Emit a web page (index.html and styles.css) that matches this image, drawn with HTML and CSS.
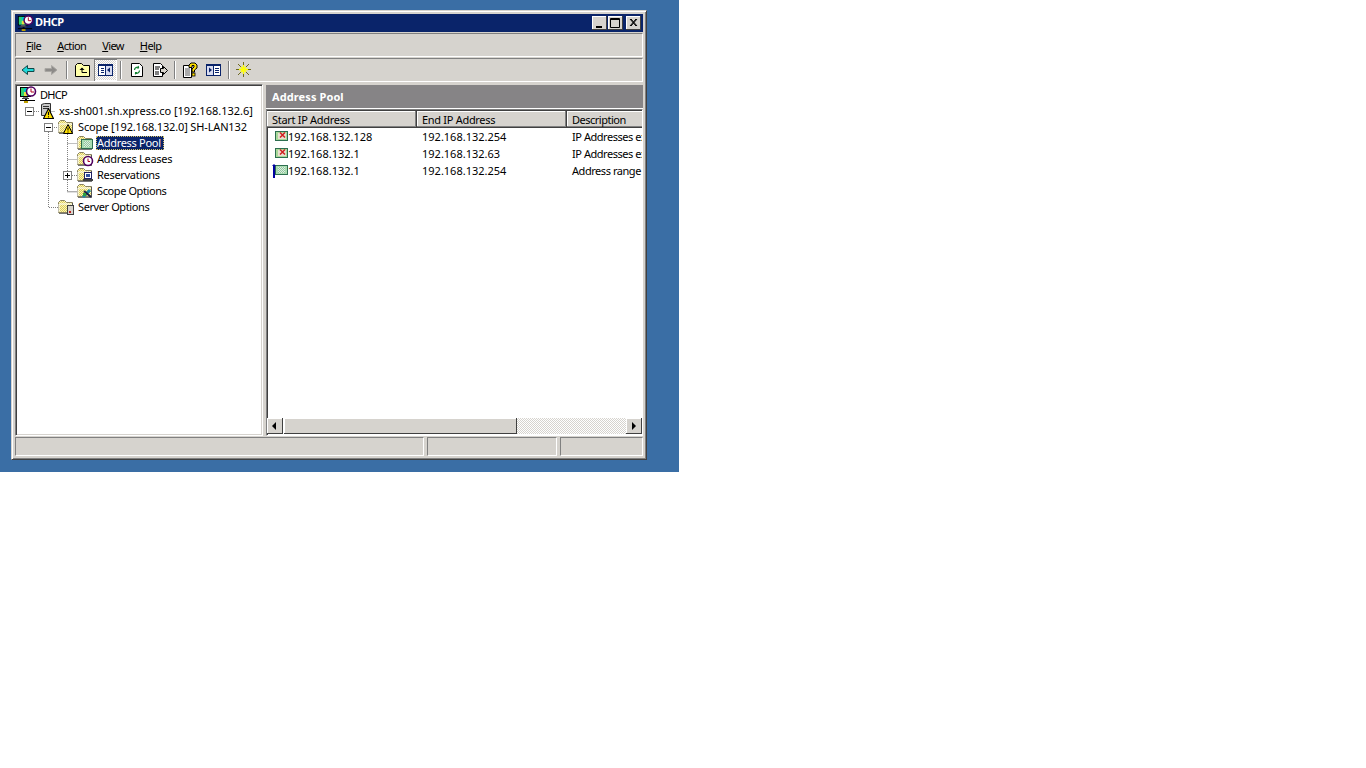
FILE: index.html
```html
<!DOCTYPE html>
<html lang="en">
<head>
<meta charset="utf-8">
<title>DHCP</title>
<link rel="stylesheet" href="styles.css">
</head>
<body>
<svg class="defs" width="0" height="0">
  <defs>
    <pattern id="dither-y" width="2" height="2" patternUnits="userSpaceOnUse">
      <rect width="2" height="2" fill="#fff8b0"/>
      <rect width="1" height="1" fill="#d8c860"/>
      <rect x="1" y="1" width="1" height="1" fill="#d8c860"/>
    </pattern>
    <pattern id="dither-g" width="2" height="2" patternUnits="userSpaceOnUse">
      <rect width="2" height="2" fill="#e0ece0"/>
      <rect width="1" height="1" fill="#90c8a0"/>
      <rect x="1" y="1" width="1" height="1" fill="#90c8a0"/>
    </pattern>
    <symbol id="dhcp" viewBox="0 0 18 18">
      <rect x="1" y="1" width="11" height="10" fill="#000"/>
      <rect x="2" y="2" width="9" height="8" fill="#00c8c8"/>
      <rect x="2" y="2" width="3" height="8" fill="#30d070"/>
      <rect x="5" y="6" width="3" height="4" fill="#e8e040"/>
      <rect x="4" y="11" width="5" height="1" fill="#808080"/>
      <rect x="3" y="12" width="7" height="1" fill="#404040"/>
      <rect x="6" y="13" width="2" height="1" fill="#000"/>
      <rect x="1" y="14" width="15" height="1" fill="#000"/>
      <rect x="5" y="15" width="4" height="2" fill="#c0a000"/>
      <circle cx="12" cy="5.5" r="4.5" fill="#fff" stroke="#500060" stroke-width="1.6"/>
      <path d="M12 2.5V6H15" fill="none" stroke="#b00020" stroke-width="1"/>
    </symbol>
    <symbol id="folder" viewBox="0 0 18 16">
      <path d="M1.5 13.5V3.5L3.5 1.5H7.5L9.5 3.5H15.5V13.5Z" fill="url(#dither-y)" stroke="#8a8360"/>
      <path d="M2 13V5H15" fill="none" stroke="#fff"/>
      <rect x="15" y="4" width="1" height="10" fill="#555"/>
      <rect x="2" y="14" width="14" height="1" fill="#777"/>
    </symbol>
    <symbol id="warn" viewBox="0 0 10 10">
      <path d="M5 .5L9.5 9.5H.5Z" fill="#ffe000" stroke="#000" stroke-width="1"/>
      <rect x="4.5" y="3.5" width="1" height="3" fill="#000"/>
      <rect x="4.5" y="7.5" width="1" height="1" fill="#000"/>
    </symbol>
    <symbol id="pool" viewBox="0 0 13 12">
      <rect x=".5" y=".5" width="12" height="9" fill="#a8dcb0" stroke="#2e6e50"/>
      <rect x="3" y="2" width="7" height="6" fill="url(#dither-g)"/>
    </symbol>
    <symbol id="excl" viewBox="0 0 13 12">
      <rect x=".5" y=".5" width="12" height="9" fill="#a8d898" stroke="#2e6e50"/>
      <rect x="3" y="2" width="8" height="6" fill="#e8e0d0"/>
      <path d="M5 1.5L10 6.5M10 1.5L5 6.5" stroke="#d02020" stroke-width="1.5"/>
    </symbol>
  </defs>
</svg>

<div class="desktop">
  <div class="window">
    <div class="titlebar">
      <svg class="title-icon" width="17" height="17"><use href="#dhcp"/></svg>
      <span class="title-text">DHCP</span>
      <div class="winbtns">
        <span class="winbtn"><svg width="15" height="14"><rect x="4" y="10" width="6" height="2" fill="#000"/></svg></span>
        <span class="winbtn"><svg width="15" height="14"><path d="M2.5 2.5H11.5V11.5H2.5Z M2 3.5H12" fill="none" stroke="#000"/></svg></span>
        <span class="winbtn winbtn-close"><svg width="15" height="14"><path d="M4 3L10 10M5 3L11 10M10 3L4 10M11 3L5 10" stroke="#000"/></svg></span>
      </div>
    </div>

    <div class="band menubar">
      <span><u>F</u>ile</span>
      <span><u>A</u>ction</span>
      <span><u>V</u>iew</span>
      <span><u>H</u>elp</span>
    </div>

    <div class="band toolbar">
      <span class="tool"><svg width="16" height="16"><path d="M2 8L7.5 3.5V6.5H14V9.5H7.5V12.5Z" fill="#20d8d8" stroke="#104848"/></svg></span>
      <span class="tool"><svg width="16" height="16"><path d="M14 8L8.5 3.5V6.5H2V9.5H8.5V12.5Z" fill="#8c8a88" stroke="#a8a6a2"/></svg></span>
      <span class="sep sep-first"></span>
      <span class="tool"><svg width="16" height="16"><path d="M.5 14.5V3.5L2.5 1.5H6.5L8.5 3.5H14.5V14.5Z" fill="#ffffa8" stroke="#000"/><path d="M7 6V10.5H12" fill="none" stroke="#000"/><path d="M4.5 8L7 5.5 9.5 8Z" fill="#000"/></svg></span>
      <span class="tool tool-on"><svg width="15" height="12"><rect x=".5" y=".5" width="14" height="11" fill="#fff" stroke="#0a246a"/><rect x="1" y="1" width="13" height="1" fill="#0a246a"/><path d="M7.5 1V11" stroke="#0a246a"/><path d="M3 4.5H6M3 6.5H6M3 8.5H6" stroke="#0a246a"/><rect x="8" y="2" width="6" height="9" fill="#d8dcf0"/><path d="M12 3.5V8.5L9 6Z" fill="#0a246a"/></svg></span>
      <span class="sep"></span>
      <span class="tool"><svg width="16" height="16"><path d="M2.5 1.5H10.5L13.5 4.5V14.5H2.5Z" fill="#fff" stroke="#000"/><path d="M5.5 8A3 3 0 0 1 10 5.5M10.5 8.5A3 3 0 0 1 6 11" fill="none" stroke="#108030" stroke-width="1.3"/><path d="M10 3.5V6.5H7.5ZM6 13V10H8.5Z" fill="#108030"/></svg></span>
      <span class="tool"><svg width="16" height="16"><path d="M1.5 1.5H8.5L10.5 3.5V14.5H1.5Z" fill="#fff" stroke="#000"/><path d="M3 5H8M3 7H7M3 10H7M3 12H7" stroke="#000"/><path d="M8.5 6.5H11.5V4.5L15.5 8.5 11.5 12.5V10.5H8.5Z" fill="#d8d4cc" stroke="#000"/></svg></span>
      <span class="sep"></span>
      <span class="tool"><svg width="16" height="16"><path d="M.5 3.5H8.5V15.5H.5Z" fill="#fff" stroke="#000"/><path d="M2 7H7M2 9H7M2 11H7M2 13H7" stroke="#555"/><path d="M6 5.5V3L8 1H12L14 3V6L11.5 8V10H9V7L11 5V3.5H9V5.5Z" fill="#ffe000" stroke="#000"/><rect x="9" y="11" width="3" height="3" fill="#ffe000" stroke="#000" stroke-width=".8"/></svg></span>
      <span class="tool"><svg width="15" height="12"><rect x=".5" y=".5" width="14" height="11" fill="#d8dcf0" stroke="#0a246a"/><rect x="1" y="1" width="13" height="1" fill="#0a246a"/><path d="M7.5 1V11" stroke="#0a246a"/><path d="M3 3.5V8.5L6 6Z" fill="#0a246a"/><rect x="8" y="2" width="6" height="9" fill="#fff"/><path d="M9 4.5H13M9 6.5H13M9 8.5H13" stroke="#0a246a"/></svg></span>
      <span class="sep sep-last"></span>
      <span class="tool"><svg width="16" height="16"><path d="M7.5 0V15M0 7.5H15M2 2L13 13M13 2L2 13" stroke="#6e6820" stroke-width="1"/><path d="M7.5 3V12M3 7.5H12M5 5L10 10M10 5L5 10" stroke="#ffff00" stroke-width="1.4"/></svg></span>
    </div>

    <div class="panes">
      <div class="tree">
        <svg class="tree-lines" width="244" height="140">
          <g fill="none" stroke="#808080" stroke-dasharray="1 1">
            <path d="M31.5 26.5H38"/>
            <path d="M31.5 47V122.5H41"/>
            <path d="M35 42.5H41"/>
            <path d="M50.5 47V107H60"/>
            <path d="M50.5 58.5H60"/>
            <path d="M50.5 74.5H60"/>
            <path d="M55 90.5H60"/>
            <path d="M50.5 106.5H60"/>
            <path d="M17 26.5H23"/>
          </g>
          <g fill="#fff" stroke="#808080">
            <rect x="8.5" y="22.5" width="8" height="8"/>
            <rect x="27.5" y="38.5" width="8" height="8"/>
            <rect x="46.5" y="86.5" width="8" height="8"/>
          </g>
          <g stroke="#000">
            <path d="M10 26.5H15"/>
            <path d="M29 42.5H34"/>
            <path d="M48 90.5H53M50.5 88V93"/>
          </g>
        </svg>

        <div class="node d0">
          <svg class="node-icon" width="18" height="18"><use href="#dhcp"/></svg>
          <span class="label t-4">DHCP</span>
        </div>
        <div class="node d1">
          <svg class="node-icon" width="18" height="16">
            <path d="M3.5 1.5L6.5 .5H12.5V12.5H3.5Z" fill="#c8c8c8" stroke="#303030"/>
            <path d="M5 3.5H11M5 5.5H11" stroke="#303030"/>
            <use href="#warn" x="5" y="5" width="11" height="11"/>
          </svg>
          <span class="label">xs-sh001.sh.xpress.co [192.168.132.6]</span>
        </div>
        <div class="node d2">
          <svg class="node-icon" width="18" height="16">
            <use href="#folder"/>
            <use href="#warn" x="6" y="5" width="10" height="10"/>
          </svg>
          <span class="label t-1">Scope [192.168.132.0] SH-LAN132</span>
        </div>
        <div class="node d3">
          <svg class="node-icon" width="18" height="16">
            <use href="#folder"/>
            <rect x="5.5" y="4.5" width="11" height="9" fill="#a8dcb0" stroke="#2e6e50"/>
            <rect x="8" y="6" width="6" height="6" fill="url(#dither-g)"/>
          </svg>
          <span class="label label-selected t-2">Address Pool</span>
        </div>
        <div class="node d3">
          <svg class="node-icon" width="18" height="16">
            <use href="#folder"/>
            <circle cx="12" cy="10" r="4.5" fill="#fff" stroke="#500060" stroke-width="1.6"/>
            <path d="M12 7.5V10.5H14" fill="none" stroke="#b00020"/>
          </svg>
          <span class="label t-2">Address Leases</span>
        </div>
        <div class="node d3">
          <svg class="node-icon" width="18" height="16">
            <use href="#folder"/>
            <rect x="8.5" y="5.5" width="7" height="6" fill="#fff" stroke="#202060"/>
            <rect x="10" y="7" width="4" height="3" fill="#3050a0"/>
            <rect x="7" y="12" width="10" height="2" fill="#404040"/>
          </svg>
          <span class="label t-2">Reservations</span>
        </div>
        <div class="node d3">
          <svg class="node-icon" width="18" height="16">
            <use href="#folder"/>
            <path d="M7 14L14 7" stroke="#1888a8" stroke-width="3"/>
            <path d="M8 8L15 14" stroke="#202040" stroke-width="2"/>
            <rect x="7" y="10" width="3" height="3" fill="#30a040"/>
          </svg>
          <span class="label t-3">Scope Options</span>
        </div>
        <div class="node d2">
          <svg class="node-icon" width="18" height="16">
            <use href="#folder"/>
            <rect x="10.5" y="6.5" width="6" height="9" fill="#d8d4cc" stroke="#404040"/>
            <rect x="12" y="12" width="2" height="2" fill="#c02020"/>
          </svg>
          <span class="label t-3">Server Options</span>
        </div>
      </div>

      <div class="detail">
        <div class="detail-title">Address Pool</div>
        <div class="list">
          <div class="list-head">
            <span class="col-head t-2">Start IP Address</span>
            <span class="col-head t-2">End IP Address</span>
            <span class="col-head col-last t-5">Description</span>
          </div>
          <div class="list-body">
            <div class="list-row">
              <span class="cell cell-first"><svg class="row-icon" width="13" height="12"><use href="#excl"/></svg>192.168.132.128</span>
              <span class="cell">192.168.132.254</span>
              <span class="cell cell-desc">IP Addresses excluded from distribution</span>
            </div>
            <div class="list-row">
              <span class="cell cell-first"><svg class="row-icon" width="13" height="12"><use href="#excl"/></svg>192.168.132.1</span>
              <span class="cell">192.168.132.63</span>
              <span class="cell cell-desc">IP Addresses excluded from distribution</span>
            </div>
            <div class="list-row">
              <span class="cell cell-first"><svg class="range-mark" width="4" height="16"><path d="M2 1V15" stroke="#0000a0" stroke-width="2"/><path d="M0 2L2 0 4 2ZM0 14L2 16 4 14Z" fill="#0000a0"/></svg><svg class="row-icon" width="13" height="12"><use href="#pool"/></svg>192.168.132.1</span>
              <span class="cell">192.168.132.254</span>
              <span class="cell cell-desc">Address range for distribution</span>
            </div>
          </div>
          <div class="hscroll">
            <span class="sb-btn"><svg width="6" height="8"><path d="M4 0V8L0 4Z" fill="#000"/></svg></span>
            <span class="sb-thumb"></span>
            <span class="sb-track"></span>
            <span class="sb-btn"><svg width="6" height="8"><path d="M1 0V8L5 4Z" fill="#000"/></svg></span>
          </div>
        </div>
      </div>
    </div>

    <div class="statusbar">
      <span class="status-pane status-main"></span>
      <span class="status-pane status-mid"></span>
      <span class="status-pane status-end"></span>
    </div>
  </div>
</div>
</body>
</html>
```
FILE: styles.css
```css
* { box-sizing: border-box; }
html, body { margin: 0; padding: 0; background: #fff; }
body { font-family: "Noto Sans", "Liberation Sans", sans-serif; font-size: 11px; color: #000; }
.defs { position: absolute; }
svg { display: block; flex: none; }

/* Text tracking, tuned label by label to the original UI font's widths */
.t-1 { letter-spacing: -.15px; }
.t-2 { letter-spacing: -.3px; }
.t-3 { letter-spacing: -.4px; }
.t-4 { letter-spacing: -.7px; }
.t-5 { letter-spacing: -.5px; }

.desktop {
  width: 679px;
  height: 472px;
  background: #3a6ea5;
  padding: 10px 0 0 11px;
}
.window {
  width: 636px;
  height: 450px;
  background: #d6d3ce;
  border: 1px solid;
  border-color: #d6d3ce #404040 #404040 #d6d3ce;
  box-shadow: inset 1px 1px #fff, inset -1px -1px #808080;
  padding: 3px;
  display: flex;
  flex-direction: column;
}

.titlebar {
  height: 18px;
  flex: none;
  background: #0a246a;
  display: flex;
  align-items: center;
  padding: 0 2px;
  color: #fff;
}
.title-icon { margin-right: 1px; }
.title-text { font-weight: bold; flex: 1; letter-spacing: -.4px; line-height: 16px; margin-top: -2px; }
.winbtns { display: flex; gap: 1px; }
.winbtn {
  width: 15px;
  height: 14px;
  background: #d6d3ce;
  box-shadow: inset -1px -1px #404040, inset 1px 1px #fff;
}
.winbtn-close { margin-left: 2px; }

.band {
  height: 24px;
  flex: none;
  margin-top: 1px;
  border: 1px solid;
  border-color: #808080 #fff #fff #808080;
  display: flex;
  align-items: center;
}
.menubar { gap: 16px; padding-left: 10px; color: #000; letter-spacing: -.6px; }
.tool {
  width: 23px;
  height: 22px;
  flex: none;
  display: flex;
  align-items: center;
  justify-content: center;
}
.tool-on {
  background-color: #fff;
  background-image: conic-gradient(#d6d3ce 25%, #fff 0 50%, #d6d3ce 0 75%, #fff 0);
  background-size: 2px 2px;
  box-shadow: inset 1px 1px #808080, inset -1px -1px #fff;
}
.sep {
  width: 2px;
  height: 18px;
  margin: 0 3px;
  flex: none;
  border-left: 1px solid #808080;
  border-right: 1px solid #fff;
}
.sep-first { margin-left: 4px; }
.sep-last { margin-right: 2px; }

.panes {
  height: 352px;
  flex: none;
  margin-top: 2px;
  display: flex;
  gap: 3px;
}
.tree {
  position: relative;
  width: 248px;
  background: #fff;
  border: 1px solid;
  border-color: #808080 #fff #fff #808080;
  box-shadow: inset 1px 1px #404040, inset -1px -1px #d6d3ce;
  padding: 2px 0 0 1px;
}
.tree-lines { position: absolute; left: 1px; top: 0; }
.node {
  position: relative;
  height: 16px;
  display: flex;
  align-items: center;
  gap: 2px;
  white-space: nowrap;
}
.d0 { padding-left: 2px; }
.d1 { padding-left: 21px; }
.d2 { padding-left: 40px; }
.d3 { padding-left: 59px; }
.label { padding: 0 1px; height: 14px; line-height: 14px; }
.label-selected {
  background: #0a246a;
  color: #fff;
  outline: 1px dotted #d4c060;
  outline-offset: -1px;
  padding: 0 3px 0 1px;
}

.detail {
  flex: 1;
  min-width: 0;
  display: flex;
  flex-direction: column;
}
.detail-title {
  height: 23px;
  flex: none;
  background: #868486;
  color: #fff;
  font-weight: bold;
  letter-spacing: .1px;
  line-height: 23px;
  padding-left: 6px;
  margin-top: 1px;
  box-shadow: 0 1px #fff;
}
.list {
  flex: 1;
  min-height: 0;
  margin-top: 1px;
  background: #fff;
  border: 1px solid;
  border-color: #808080 #fff #fff #808080;
  box-shadow: inset 1px 1px #404040;
  padding: 1px 0 1px 0;
  display: flex;
  flex-direction: column;
}
.list-head { display: flex; height: 17px; flex: none; }
.col-head {
  width: 150px;
  flex: none;
  background: #d6d3ce;
  line-height: 17px;
  padding-left: 5px;
  overflow: hidden;
  white-space: nowrap;
  box-shadow: inset -1px -1px #404040, inset -2px -2px #808080, inset 1px 1px #fff;
}
.col-last { flex: 1; width: auto; box-shadow: inset 0 -1px #404040, inset 0 -2px #808080, inset 1px 1px #fff; }
.list-body { flex: 1; min-height: 0; }
.list-row { display: flex; height: 17px; align-items: center; }
.cell {
  width: 150px;
  flex: none;
  padding-left: 5px;
  white-space: nowrap;
  overflow: hidden;
}
.cell-desc { flex: 1; width: auto; min-width: 0; letter-spacing: -.45px; }
.cell-first {
  position: relative;
  display: flex;
  align-items: center;
  padding-left: 8px;
}
.row-icon { margin-top: 1px; }
.range-mark { position: absolute; left: 5px; top: 1px; }

.hscroll { display: flex; height: 16px; flex: none; }
.sb-btn {
  width: 16px;
  height: 16px;
  flex: none;
  background: #d6d3ce;
  box-shadow: inset -1px -1px #404040, inset 1px 1px #fff;
  display: flex;
  align-items: center;
  justify-content: center;
}
.sb-thumb {
  width: 233px;
  flex: none;
  background: #d6d3ce;
  box-shadow: inset -1px -1px #404040, inset 1px 1px #fff;
  margin-left: 1px;
}
.sb-track {
  flex: 1;
  background-color: #fff;
  background-image: conic-gradient(#d6d3ce 25%, #fff 0 50%, #d6d3ce 0 75%, #fff 0);
  background-size: 2px 2px;
}

.statusbar {
  height: 19px;
  flex: none;
  margin-top: 1px;
  display: flex;
  gap: 3px;
}
.status-pane {
  display: block;
  border: 1px solid;
  border-color: #808080 #fff #fff #808080;
}
.status-main { width: 409px; }
.status-mid { width: 130px; }
.status-end { flex: 1; }
```
